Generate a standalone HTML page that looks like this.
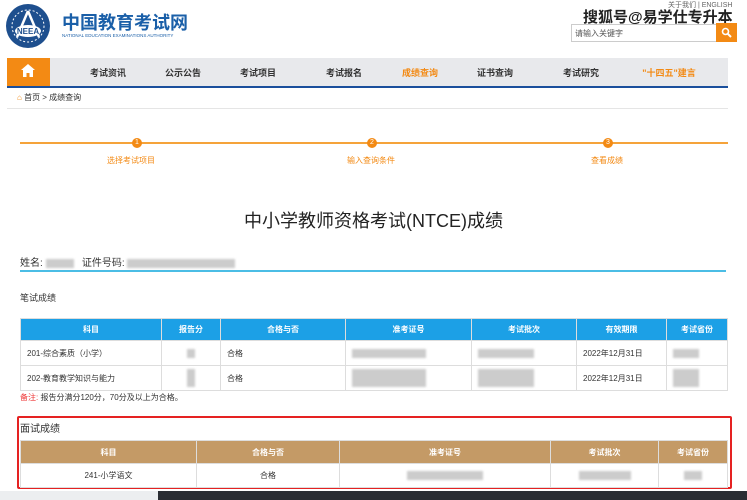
<!DOCTYPE html>
<html><head><meta charset="utf-8"><style>
*{margin:0;padding:0;box-sizing:border-box}
body{width:747px;height:500px;overflow:hidden;background:#fff;font-family:"Liberation Sans","Noto Sans CJK SC",sans-serif;position:relative;color:#333}
.a{position:absolute}
.nav span{position:absolute;top:66px;font-size:9px;font-weight:bold;color:#333;transform:translateX(-50%);white-space:nowrap}
table{border-collapse:collapse;position:absolute;font-size:8px}
td,th{border:1px solid #ddd;padding:0 6px;white-space:nowrap}
th{color:#fff;font-weight:bold;text-align:center}
.b{display:inline-block;background:#ccc;height:9px;vertical-align:middle;filter:blur(1px)}
</style></head><body>
<svg class="a" style="left:5px;top:3px" width="46" height="46" viewBox="0 0 46 46"><circle cx="23" cy="23" r="22" fill="#1e4f8e"/><circle cx="23" cy="23" r="16" fill="none" stroke="#fff" stroke-width="1" stroke-dasharray="2 2"/><path d="M23 8 L12 34 M23 8 L34 34" stroke="#fff" stroke-width="2.5" fill="none"/><ellipse cx="23" cy="28" rx="13" ry="6" fill="#fff"/><text x="23" y="31" font-size="8" text-anchor="middle" fill="#1e4f8e" font-family="Liberation Sans" font-weight="bold">NEEA</text></svg>
<div class="a" style="left:62px;top:9px;font-size:18px;font-weight:bold;color:#1a5fa8;letter-spacing:0px">中国教育考试网</div>
<div class="a" style="left:62px;top:33px;font-size:4.5px;color:#1a5fa8;white-space:nowrap">NATIONAL EDUCATION EXAMINATIONS AUTHORITY</div>
<div class="a" style="left:668px;top:0px;font-size:7px;color:#666">关于我们 | ENGLISH</div>
<div class="a" style="left:583px;top:6px;font-size:15px;color:#222;font-weight:bold;text-shadow:0 0 1px #fff,0 0 1px #fff,1px 1px 1px #fff">搜狐号@易学仕专升本</div>
<div class="a" style="left:571px;top:24px;width:146px;height:18px;border:1px solid #ccc;font-size:8px;color:#555;padding:3px 3px">请输入关键字</div>
<div class="a" style="left:716px;top:23px;width:21px;height:19px;background:#f38a14"></div>
<svg class="a" style="left:721px;top:27px" width="11" height="11" viewBox="0 0 11 11"><circle cx="4.5" cy="4.5" r="3" fill="none" stroke="#fff" stroke-width="1.6"/><path d="M6.8 6.8 L10 10" stroke="#fff" stroke-width="2"/></svg>
<div class="a" style="left:7px;top:58px;width:721px;height:28px;background:#e8e9ec"></div>
<div class="a" style="left:7px;top:86px;width:721px;height:2px;background:#1a4f9c"></div>
<div class="a" style="left:7px;top:58px;width:43px;height:28px;background:#f38a14"></div>
<svg class="a" style="left:21px;top:64px" width="14" height="13" viewBox="0 0 14 13"><path d="M7 0 L0 6 H2 V13 H5.5 V9 H8.5 V13 H12 V6 H14 Z" fill="#fff"/></svg>
<div class="nav"><span style="left:108px">考试资讯</span><span style="left:183px">公示公告</span><span style="left:258px">考试项目</span><span style="left:344px">考试报名</span><span style="left:420px;color:#f38a14">成绩查询</span><span style="left:495px">证书查询</span><span style="left:581px">考试研究</span><span style="left:669px;color:#f38a14">"十四五"建言</span></div>
<div class="a" style="left:17px;top:92px;font-size:8px;color:#333"><span style="color:#f38a14">&#8962;</span> 首页 &gt; 成绩查询</div>
<div class="a" style="left:7px;top:108px;width:721px;height:1px;background:#e5e5e5"></div>
<div class="a" style="left:20px;top:142px;width:708px;height:2px;background:#f5a33a"></div>
<div class="a" style="left:132px;top:138px;width:10px;height:10px;border-radius:50%;background:#f38a14;color:#fff;font-size:7px;text-align:center;line-height:10px">1</div>
<div class="a" style="left:367px;top:138px;width:10px;height:10px;border-radius:50%;background:#f38a14;color:#fff;font-size:7px;text-align:center;line-height:10px">2</div>
<div class="a" style="left:603px;top:138px;width:10px;height:10px;border-radius:50%;background:#f38a14;color:#fff;font-size:7px;text-align:center;line-height:10px">3</div>
<div class="a" style="left:107px;top:155px;font-size:8px;color:#f38a14">选择考试项目</div>
<div class="a" style="left:347px;top:155px;font-size:8px;color:#f38a14">输入查询条件</div>
<div class="a" style="left:591px;top:155px;font-size:8px;color:#f38a14">查看成绩</div>
<div class="a" style="left:0;width:747px;top:207px;text-align:center;font-size:18px;color:#222">中小学教师资格考试(NTCE)成绩</div>
<div class="a" style="left:20px;top:254px;font-size:10px;color:#333">姓名: <span class="b" style="width:28px"></span> &nbsp; 证件号码: <span class="b" style="width:108px"></span></div>
<div class="a" style="left:20px;top:270px;width:706px;height:2px;background:#4bbde5"></div>
<div class="a" style="left:20px;top:291px;font-size:9px;color:#333">笔试成绩</div>
<table style="left:20px;top:318px;width:708px">
<tr style="height:22px;background:#1ca0e6"><th style="width:141px">科目</th><th style="width:59px">报告分</th><th style="width:125px">合格与否</th><th style="width:126px">准考证号</th><th style="width:105px">考试批次</th><th style="width:90px">有效期限</th><th>考试省份</th></tr>
<tr style="height:25px"><td>201-综合素质（小学）</td><td style="text-align:center"><span class="b" style="width:8px"></span></td><td>合格</td><td><span class="b" style="width:74px"></span></td><td><span class="b" style="width:56px"></span></td><td>2022年12月31日</td><td><span class="b" style="width:26px"></span></td></tr>
<tr style="height:25px"><td>202-教育教学知识与能力</td><td style="text-align:center"><span class="b" style="width:8px;height:18px"></span></td><td>合格</td><td><span class="b" style="width:74px;height:18px"></span></td><td><span class="b" style="width:56px;height:18px"></span></td><td>2022年12月31日</td><td><span class="b" style="width:26px;height:18px"></span></td></tr>
</table>
<div class="a" style="left:20px;top:392px;font-size:8px;color:#333"><span style="color:#e33">备注:</span> 报告分满分120分，70分及以上为合格。</div>
<div class="a" style="left:17px;top:416px;width:715px;height:73px;border:2px solid #e52222;border-radius:2px"></div>
<div class="a" style="left:20px;top:420px;font-size:10px;color:#333">面试成绩</div>
<table style="left:20px;top:440px;width:708px">
<tr style="height:23px;background:#c49a66"><th style="width:176px">科目</th><th style="width:143px">合格与否</th><th style="width:211px">准考证号</th><th style="width:108px">考试批次</th><th>考试省份</th></tr>
<tr style="height:24px"><td style="text-align:center">241-小学语文</td><td style="text-align:center">合格</td><td style="text-align:center"><span class="b" style="width:76px"></span></td><td style="text-align:center"><span class="b" style="width:52px"></span></td><td style="text-align:center"><span class="b" style="width:18px"></span></td></tr>
</table>
<div class="a" style="left:0;top:491px;width:158px;height:9px;background:#eceef0"></div>
<div class="a" style="left:158px;top:491px;width:589px;height:9px;background:#2a2d33"></div>
</body></html>
